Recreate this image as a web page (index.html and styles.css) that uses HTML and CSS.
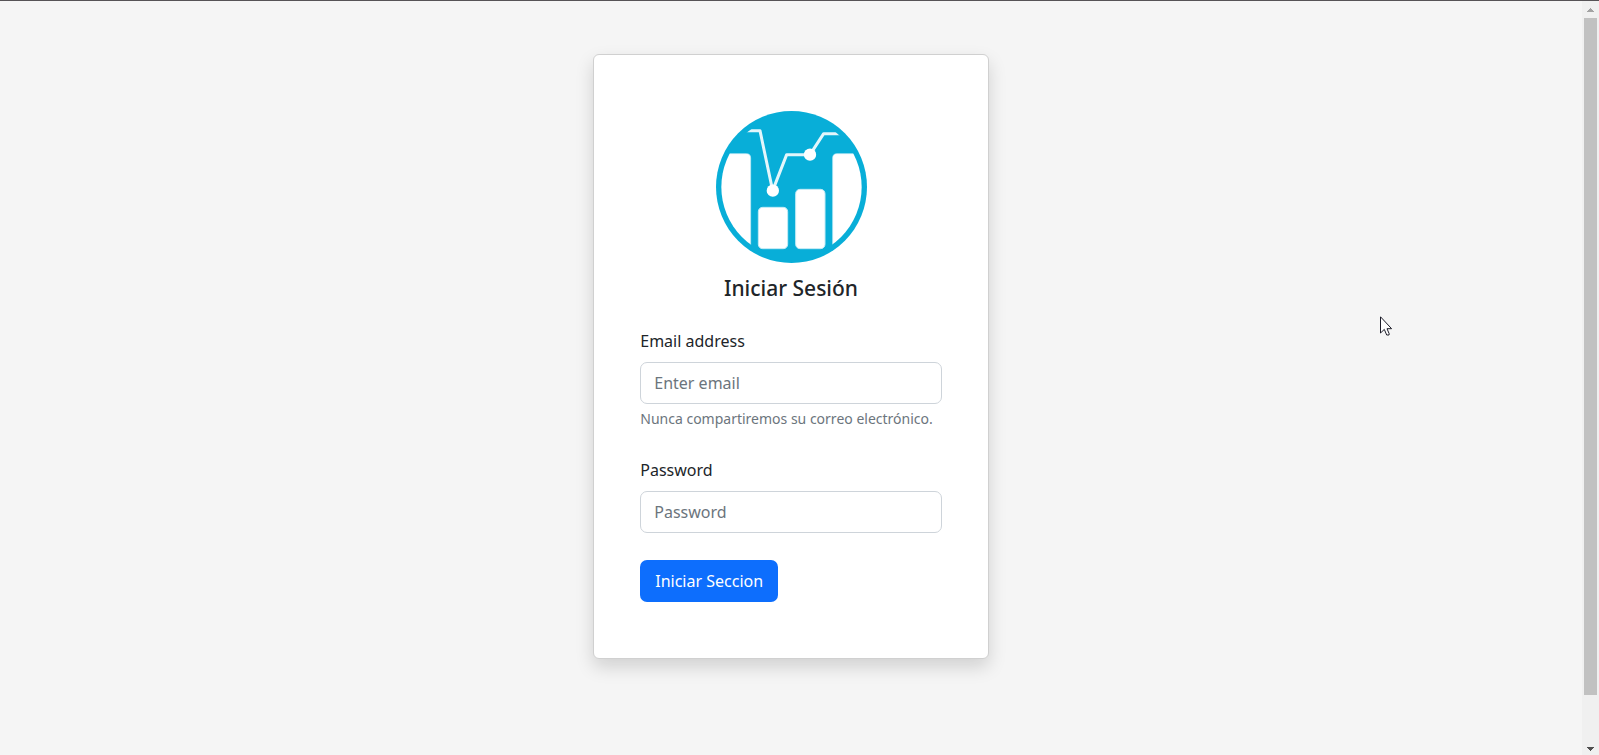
FILE: index.html
```html
<!DOCTYPE html>
<html lang="es">
<head>
<meta charset="utf-8">
<title>Iniciar Sesión</title>
<link rel="stylesheet" href="styles.css">
</head>
<body>
<div class="window">
  <main class="page">
    <form class="card">
      <svg class="logo" viewBox="45 33 453 456" aria-hidden="true">
        <defs>
          <clipPath id="inner"><ellipse cx="271.500" cy="261" rx="210.500" ry="212"/></clipPath>
        </defs>
        <ellipse cx="271.500" cy="261" rx="226.500" ry="228" fill="#08aed8"/>
        <g clip-path="url(#inner)" fill="#fff" stroke="#c3ebf6" stroke-width="2">
          <path d="M30 161H136Q149 161 149 174V500H30Z"/>
          <path d="M520 161H408Q395 161 395 174V500H520Z"/>
        </g>
        <g fill="#fff" stroke="#c3ebf6" stroke-width="3">
          <rect x="172" y="322" width="88" height="124" rx="13"/>
          <rect x="284" y="268" width="88" height="178" rx="13"/>
        </g>
        <path d="M130 92H177L215 272L257 164H327L368 101H425" clip-path="url(#inner)" fill="none" stroke="#e3f6fb" stroke-width="9" stroke-linejoin="round"/>
        <circle cx="215.500" cy="272" r="18.500" fill="#fff"/>
        <circle cx="327" cy="164" r="18.500" fill="#fff"/>
      </svg>
      <h1 class="title">Iniciar Sesión</h1>
      <div class="field">
        <label class="label" for="email">Email address</label>
        <input class="input" id="email" type="email" placeholder="Enter email" aria-describedby="email-help">
        <small class="help" id="email-help">Nunca compartiremos su correo electrónico.</small>
      </div>
      <div class="field">
        <label class="label" for="password">Password</label>
        <input class="input" id="password" type="password" placeholder="Password">
      </div>
      <button class="button" type="submit">Iniciar Seccion</button>
    </form>
  </main>
  <div class="scrollbar" aria-hidden="true">
    <svg class="arrow" viewBox="0 0 17 17" shape-rendering="crispEdges"><path d="M8 7h1v1h1v1h1v1h1v1H5v-1h1V9h1V8h1z" fill="#a3a3a3"/></svg>
    <div class="track"><div class="thumb"></div></div>
    <svg class="arrow" viewBox="0 0 17 17" shape-rendering="crispEdges"><path d="M5 9h7v1h-1v1h-1v1H9v1H8v-1H7v-1H6v-1H5z" fill="#505050"/></svg>
  </div>
</div>
<svg class="pointer" viewBox="0 0 12 20" aria-hidden="true"><path d="M.5 .8V17L4.300 13.400L6.700 19H9L9.200 17.800L7 12.700H11.600Z" fill="#fff" stroke="#1c1c28"/></svg>
</body>
</html>
```
FILE: styles.css
```css
* {
  box-sizing: border-box;
}

body {
  margin: 0;
  background: #f5f5f5;
  color: #212529;
  font-family: "Segoe UI", "Noto Sans", "Open Sans", sans-serif;
  font-size: 16px;
  line-height: 26px;
}

.window {
  display: flex;
  height: 100vh;
  border-top: 1px solid #565356;
}

.page {
  flex: 1;
  display: flex;
  justify-content: center;
  align-items: flex-start;
  padding-top: 53px;
}

.card {
  display: flex;
  flex-direction: column;
  min-width: 25%;
  padding: 56px 46px;
  background: #fff;
  border: 1px solid #d0d0d0;
  border-radius: 6px;
  box-shadow: 0 8px 18px rgba(0, 0, 0, 0.15);
}

.logo {
  width: 151px;
  height: 152px;
  align-self: center;
}

.title {
  margin: 12px 0 27px;
  font-size: 21px;
  font-weight: 500;
  line-height: 26px;
  text-align: center;
}

.field {
  display: flex;
  flex-direction: column;
  margin-bottom: 27px;
}

.label {
  margin-bottom: 8px;
}

.input {
  width: 100%;
  height: 42px;
  padding: 0 13px;
  border: 1px solid #ced4da;
  border-radius: 7px;
  background: #fff;
  color: inherit;
  font: inherit;
}

.input::placeholder {
  color: #6c757d;
  opacity: 1;
}

.help {
  margin-top: 4px;
  color: #6c757d;
  font-size: 14px;
  line-height: 22px;
}

.button {
  align-self: flex-start;
  height: 42px;
  padding: 0 15px;
  border: 0;
  border-radius: 7px;
  background: #0d6efd;
  color: #fff;
  font: inherit;
}

.scrollbar {
  display: flex;
  flex-direction: column;
  width: 17px;
  background: #f0f0f0;
}

.arrow {
  width: 17px;
  height: 17px;
}

.track {
  flex: 1;
  padding: 0 2px;
}

.thumb {
  height: 94%;
  background: #c1c1c1;
}

.pointer {
  position: absolute;
  left: 1380px;
  top: 316px;
  width: 12px;
  height: 20px;
}
```
